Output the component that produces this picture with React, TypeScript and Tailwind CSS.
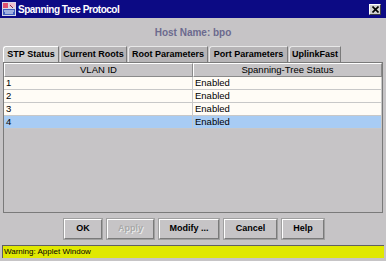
import React from "react";

const tabs = [
  { label: "STP Status", w: "w-[56px]", active: true },
  { label: "Current Roots", w: "w-[67px]", active: false },
  { label: "Root Parameters", w: "w-[80px]", active: false },
  { label: "Port Parameters", w: "w-[79px]", active: false },
  { label: "UplinkFast", w: "w-[52px]", active: false },
];

const rows = ["1", "2", "3", "4"];

function AppletIcon() {
  return (
    <svg width="14" height="14" viewBox="0 0 14 14">
      <rect x="0" y="0" width="14" height="14" fill="#d8d8e8" />
      <rect x="1" y="1" width="5" height="5" fill="#e05070" />
      <rect x="7" y="1" width="6" height="4" fill="#f0c0d0" />
      <rect x="1" y="7" width="12" height="6" fill="#4060c0" />
      <path d="M2 9h10M3 11h8" stroke="#ffffff" strokeWidth="1" />
      <path d="M8 3l3 3" stroke="#803050" strokeWidth="1" />
    </svg>
  );
}

function Button({ label, w, disabled }: { label: string; w: string; disabled?: boolean }) {
  return (
    <div
      className={`${w} h-[20px] flex items-center justify-center border border-t-white border-l-white border-r-[#7a7a7a] border-b-[#7a7a7a] outline outline-1 outline-[#a0a0a0] text-[9px] font-bold ${
        disabled ? "text-[#a8a8a8] [text-shadow:1px_1px_0_#ececec]" : "text-black"
      }`}
    >
      {label}
    </div>
  );
}

export default function App() {
  return (
    <div className="w-[386px] h-[261px] bg-[#c6c4c6] flex flex-col overflow-hidden font-['Liberation_Sans',Arial,sans-serif]">
      <div className="h-[18px] bg-[#0c0a84] flex items-center px-[2px] shrink-0">
        <AppletIcon />
        <span className="ml-[2px] text-white text-[10px] font-bold tracking-[-0.5px]">
          Spanning Tree Protocol
        </span>
        <div className="ml-auto mr-[3px] w-[12px] h-[11px] bg-[#d0d0d0] border border-t-white border-l-white border-r-[#404040] border-b-[#404040] flex items-center justify-center">
          <svg width="7" height="7" viewBox="0 0 7 7">
            <path d="M0.5 0.5L6.5 6.5M6.5 0.5L0.5 6.5" stroke="#000" strokeWidth="1.6" />
          </svg>
        </div>
      </div>

      <div className="h-[28px] flex items-center justify-center text-[10px] font-bold text-[#6c6a8e] shrink-0">
        Host Name: bpo
      </div>

      <div className="h-[16px] flex items-end pl-[3px] gap-[1px] shrink-0">
        {tabs.map((t) => (
          <div
            key={t.label}
            className={`${t.w} h-[16px] flex items-center justify-center text-[9px] font-bold text-black border-t border-l border-r rounded-tl-[3px] ${
              t.active
                ? "bg-[#cecece] border-t-white border-l-white border-r-[#7a7a7a]"
                : "bg-[#b6b4b6] border-t-[#e8e8e8] border-l-[#e8e8e8] border-r-[#7a7a7a]"
            }`}
          >
            {t.label}
          </div>
        ))}
      </div>

      <div className="mx-[3px] h-[151px] border border-[#7a7a7a] bg-[#c6c4c6] flex flex-col shrink-0">
        <div className="flex h-[14px] text-[9.5px] text-black">
          <div className="w-[189px] flex items-center justify-center border border-t-white border-l-white border-r-[#8a8a8a] border-b-[#8a8a8a]">
            VLAN ID
          </div>
          <div className="flex-1 flex items-center justify-center border border-t-white border-l-white border-r-[#8a8a8a] border-b-[#8a8a8a]">
            Spanning-Tree Status
          </div>
        </div>
        {rows.map((r, i) => (
          <div
            key={r}
            className={`flex h-[13px] text-[9.5px] text-black ${
              i === 3 ? "bg-[#a8ccf4]" : "bg-[#fffcf6]"
            }`}
          >
            <div className="w-[189px] pl-[2px] flex items-center border-r border-b border-[#c8c8c8]">{r}</div>
            <div className="flex-1 pl-[2px] flex items-center border-r border-b border-[#c8c8c8]">Enabled</div>
          </div>
        ))}
      </div>

      <div className="flex-1 flex items-center justify-center gap-[5px] pl-[2px] pb-[1px]">
        <Button label="OK" w="w-[38px]" />
        <Button label="Apply" w="w-[47px]" disabled />
        <Button label="Modify ..." w="w-[60px]" />
        <Button label="Cancel" w="w-[53px]" />
        <Button label="Help" w="w-[42px]" />
      </div>

      <div className="mx-[2px] mb-[3px] h-[13px] bg-[#e0e800] border-t border-l border-[#606060] flex items-center pl-[1px] text-[8px] text-black shrink-0">
        Warning: Applet Window
      </div>
    </div>
  );
}
